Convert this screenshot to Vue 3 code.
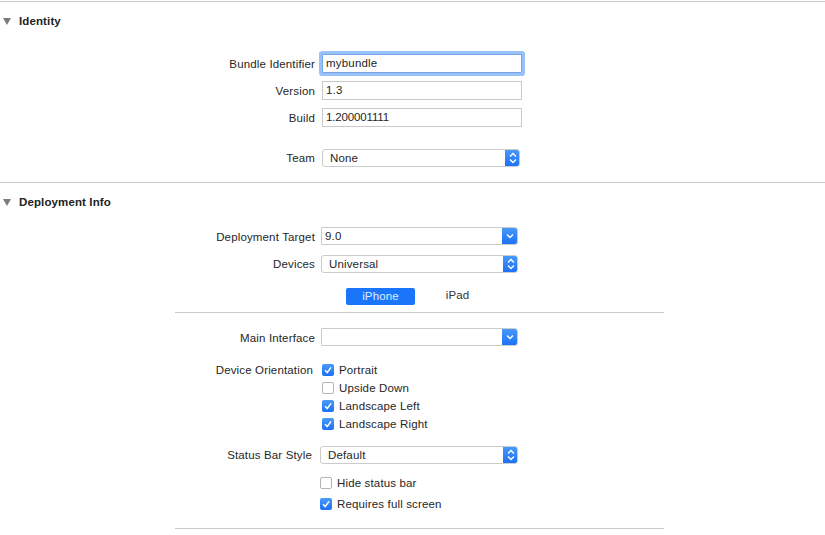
<template>
  <div class="page">
    <section class="section identity">
      <h2 class="heading"><span class="disclosure"></span>Identity</h2>
      <div class="row bundle">
        <label class="label">Bundle Identifier</label>
        <div class="field focused">{{ identity.bundle }}</div>
      </div>
      <div class="row version">
        <label class="label">Version</label>
        <div class="field">{{ identity.version }}</div>
      </div>
      <div class="row build">
        <label class="label">Build</label>
        <div class="field">{{ identity.build }}</div>
      </div>
      <div class="row team">
        <label class="label">Team</label>
        <div class="popup team-popup">
          <span class="popup-text">None</span>
          <span class="popup-btn"><svg width="8" height="12" viewBox="0 0 8 12"><path d="M1 4.5 4 1.5 7 4.5M1 7.5 4 10.5 7 7.5" /></svg></span>
        </div>
      </div>
    </section>

    <section class="section deployment">
      <h2 class="heading"><span class="disclosure"></span>Deployment Info</h2>
      <div class="row target">
        <label class="label">Deployment Target</label>
        <div class="popup combo">
          <span class="popup-text">9.0</span>
          <span class="popup-btn"><svg width="8" height="6" viewBox="0 0 8 6"><path d="M1 1.5 4 4.5 7 1.5" /></svg></span>
        </div>
      </div>
      <div class="row devices">
        <label class="label">Devices</label>
        <div class="popup wide">
          <span class="popup-text">Universal</span>
          <span class="popup-btn"><svg width="8" height="12" viewBox="0 0 8 12"><path d="M1 4.5 4 1.5 7 4.5M1 7.5 4 10.5 7 7.5" /></svg></span>
        </div>
      </div>
      <div class="tabs">
        <span class="tab active">iPhone</span>
        <span class="tab">iPad</span>
      </div>
      <hr class="divider first" />
      <div class="row interface">
        <label class="label">Main Interface</label>
        <div class="popup combo">
          <span class="popup-text"></span>
          <span class="popup-btn"><svg width="8" height="6" viewBox="0 0 8 6"><path d="M1 1.5 4 4.5 7 1.5" /></svg></span>
        </div>
      </div>
      <div class="orientation">
        <label class="label orient-label">Device Orientation</label>
        <div class="checks">
          <div v-for="item in orientations" :key="item.name" class="check-row">
            <span class="check" :class="{ on: item.on }">
              <svg v-if="item.on" width="12" height="12" viewBox="0 0 12 12"><path d="M3 6.3 5.2 8.6 9 3.4" /></svg>
            </span>
            {{ item.name }}
          </div>
        </div>
      </div>
      <div class="row status">
        <label class="label">Status Bar Style</label>
        <div class="popup status-popup">
          <span class="popup-text">Default</span>
          <span class="popup-btn"><svg width="8" height="12" viewBox="0 0 8 12"><path d="M1 4.5 4 1.5 7 4.5M1 7.5 4 10.5 7 7.5" /></svg></span>
        </div>
      </div>
      <div class="status-checks">
        <div class="check-row tall">
          <span class="check"></span>
          Hide status bar
        </div>
        <div class="check-row tall">
          <span class="check on"><svg width="12" height="12" viewBox="0 0 12 12"><path d="M3 6.3 5.2 8.6 9 3.4" /></svg></span>
          Requires full screen
        </div>
      </div>
      <hr class="divider last" />
    </section>
  </div>
</template>

<script setup>
const identity = {
  bundle: "mybundle",
  version: "1.3",
  build: "1.200001111",
};

const orientations = [
  { name: "Portrait", on: true },
  { name: "Upside Down", on: false },
  { name: "Landscape Left", on: true },
  { name: "Landscape Right", on: true },
];
</script>

<style>
html,
body {
  margin: 0;
  background: #fff;
}
</style>

<style scoped>
.page {
  width: 825px;
  height: 535px;
  overflow: hidden;
  background: #fff;
  font-family: "Liberation Sans", Arial, sans-serif;
  font-size: 11.5px;
  letter-spacing: 0.15px;
  color: #262626;
}
.section {
  border-top: 1px solid #c8c8c8;
}
.identity {
  margin-top: 1px;
  height: 180px;
}
.deployment {
  height: 352px;
}
.heading {
  display: flex;
  align-items: center;
  margin: 12px 0 0;
  height: 14px;
  font-size: 11.5px;
  font-weight: bold;
  letter-spacing: 0.12px;
  color: #222;
}
.disclosure {
  width: 0;
  height: 0;
  margin: 0 8px 0 3px;
  border-left: 4px solid transparent;
  border-right: 4px solid transparent;
  border-top: 7px solid #7c7c7c;
}
.row {
  display: flex;
  align-items: center;
  height: 19px;
}
.label {
  width: 315px;
  flex: none;
  text-align: right;
}
.field {
  box-sizing: border-box;
  width: 200px;
  height: 19px;
  margin-left: 7px;
  padding-left: 3px;
  line-height: 17px;
  border: 1px solid #c9c9c9;
  background: #fff;
}
.field.focused {
  border-color: #78a5e3;
  box-shadow: 0 0 0 3px #98c1f8;
  border-radius: 1px;
  letter-spacing: 0.2px;
}
.bundle {
  margin-top: 26px;
}
.version {
  margin-top: 8px;
}
.build {
  margin-top: 8px;
}
.build .field {
  letter-spacing: -0.15px;
}
.team {
  margin-top: 22px;
  height: 18px;
}
.popup {
  box-sizing: border-box;
  display: flex;
  height: 18px;
  background: #fff;
  border: 1px solid #cbcbcb;
  border-radius: 3px;
  overflow: hidden;
}
.team-popup {
  width: 198px;
  margin-left: 7px;
}
.wide,
.combo {
  width: 197px;
  margin-left: 6px;
}
.combo {
  border-radius: 1px 3px 3px 1px;
}
.status-popup {
  width: 198px;
  margin-left: 5px;
}
.popup-text {
  flex: 1;
  padding-left: 7px;
  line-height: 16px;
}
.combo .popup-text {
  padding-left: 3px;
}
.popup-btn {
  display: flex;
  align-items: center;
  justify-content: center;
  width: 15px;
  margin: -1px -1px -1px 0;
  background: linear-gradient(#4a9bfb, #1a6ff5);
}
.combo .popup-btn {
  width: 16px;
}
.popup-btn svg {
  fill: none;
  stroke: #fff;
  stroke-width: 1.4;
}
.target {
  margin-top: 18px;
}
.target,
.devices,
.interface,
.status {
  height: 18px;
}
.target .label,
.interface .label {
  padding-top: 2px;
}
.devices {
  margin-top: 10px;
}
.tabs {
  display: flex;
  margin: 15px 0 0 346px;
  height: 17px;
}
.tab {
  width: 69px;
  line-height: 15px;
  text-align: center;
  margin-right: 8px;
  color: #333;
}
.tab.active {
  line-height: 17px;
  background: #1a75fb;
  color: #dfeeff;
  border-radius: 2px;
}
.divider {
  margin: 0 0 0 175px;
  width: 489px;
  height: 1px;
  border: 0;
  background: #c9c9c9;
}
.divider.first {
  margin-top: 7px;
}
.interface {
  margin-top: 15px;
}
.orientation {
  display: flex;
  margin-top: 15px;
}
.orient-label {
  width: 313px;
  line-height: 18px;
}
.checks {
  margin-left: 9px;
}
.check-row {
  display: flex;
  align-items: center;
  gap: 5px;
  height: 18px;
}
.check {
  box-sizing: border-box;
  width: 12px;
  height: 12px;
  border: 1px solid #b5b5b5;
  border-radius: 2px;
  background: #fff;
  flex: none;
}
.check.on {
  border: 0;
  background: linear-gradient(#4a9bfb, #1a6ff5);
}
.check svg {
  display: block;
  fill: none;
  stroke: #fff;
  stroke-width: 1.6;
}
.status {
  margin-top: 13px;
}
.status .label {
  width: 312px;
  margin-right: 3px;
}
.status-checks {
  margin: 8px 0 0 320px;
}
.check-row.tall {
  height: 21px;
}
.divider.last {
  margin-top: 14px;
}
</style>
